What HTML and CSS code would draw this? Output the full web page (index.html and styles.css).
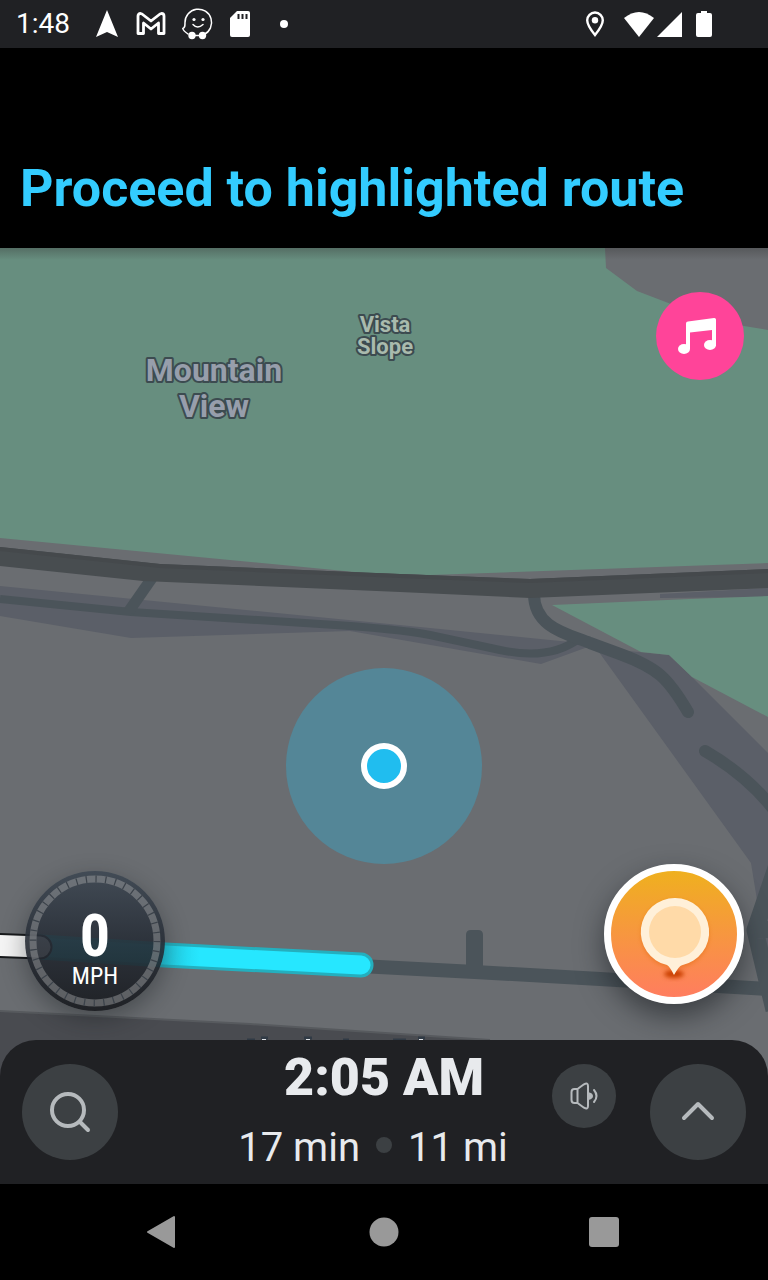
FILE: index.html
```html
<!DOCTYPE html>
<html lang="en">
<head>
<meta charset="utf-8">
<meta name="viewport" content="width=device-width, initial-scale=1">
<title>Navigation</title>
<link rel="stylesheet" href="styles.css">
</head>
<body>
<header class="status">
  <time class="clock">1:48</time>
  <div class="status-icons">
    <svg width="24" height="28" viewBox="0 0 24 28"><path fill="#fff" d="M12 0 23 27 12 22 1 27Z"/></svg>
    <svg width="30" height="24" viewBox="0 0 30 24"><path fill="none" stroke="#fff" stroke-width="2.8" stroke-linejoin="round" d="M2 4Q2 1.5 4.500 1.500L6 2l9 7 9-7 1.500-.5Q28 1.500 28 4v17.500h-5.500V11l-7.500 6L7.500 11v10.500H2Z"/></svg>
    <svg width="30" height="32" viewBox="2 0 30 32"><g fill="none" stroke="#fff" stroke-width="1.500" stroke-linecap="round"><path d="M7 26C4 24 2 22 1.800 20.500 4 20 4 18 4 14.500A13.300 13.300 0 1 1 23 26.500M13 27.500h5M12 16.500q4.500 5 10 0"/></g><g fill="#fff"><circle cx="13" cy="11.500" r="1.600"/><circle cx="22" cy="11.500" r="1.600"/><circle cx="11" cy="27.500" r="3.700"/><circle cx="21.500" cy="27.500" r="3.700"/></g></svg>
    <svg width="20" height="26" viewBox="0 0 20 26"><path fill="#fff" d="M7 0h11q2 0 2 2v22q0 2-2 2H2q-2 0-2-2V7Z"/><path stroke="#202124" stroke-width="2" d="M8.500 3v5M12.500 3v5M16.500 3v5"/></svg>
    <svg class="more" width="8" height="8" viewBox="0 0 8 8"><circle cx="4" cy="4" r="4" fill="#fff"/></svg>
  </div>
  <div class="system-icons">
    <svg width="18" height="26" viewBox="0 0 18 26"><path fill="none" stroke="#fff" stroke-width="2.400" d="M9 24Q1.200 14.500 1.200 9.300a7.800 7.800 0 0 1 15.600 0Q16.800 14.500 9 24Z"/><circle cx="9" cy="9.300" r="3.200" fill="#fff"/></svg>
    <svg class="wifi" width="30" height="25" viewBox="0 0 30 25"><path fill="#fff" d="M0 6Q15-6 30 6L15 25Z"/></svg>
    <svg width="25" height="25" viewBox="0 0 25 25"><path fill="#fff" d="M25 0v25H0Z"/></svg>
    <svg class="battery" width="16" height="26" viewBox="0 0 16 26"><path fill="#fff" d="M5 0h6v2h3q2 0 2 2v20q0 2-2 2H2q-2 0-2-2V4q0-2 2-2h3Z"/></svg>
  </div>
</header>

<section class="banner"><h1>Proceed to highlighted route</h1></section>

<main class="stage">
  <svg class="map" viewBox="0 248 768 936" preserveAspectRatio="xMidYMin slice" role="img" aria-label="Map">
    <defs>
      <linearGradient id="routeStart" gradientUnits="userSpaceOnUse" x1="0" y1="0" x2="200" y2="0">
        <stop offset=".8" stop-color="#22c9de"/><stop offset="1" stop-color="#26e7ff"/>
      </linearGradient>
      <linearGradient id="topShade" x1="0" y1="0" x2="0" y2="1">
        <stop offset="0" stop-color="#333" stop-opacity=".35"/><stop offset="1" stop-color="#333" stop-opacity="0"/>
      </linearGradient>
    </defs>
    <path fill="#6a6d71" d="M0 248h768v936H0Z"/>
    <g fill="#5b5f68">
      <path d="M0 586 430 628 560 641 596 644 541 664 350 631 131 638 0 616Z"/>
      <path d="M596 648 618 650 669 655 692 677 768 753V1010L757 900 751 863Z"/>
      <path d="M660 594 768 588v9l-108 1Z"/>
    </g>
    <g fill="#678e7f">
      <path d="M0 248h605l1 20 31 23 34 13 73 22 24 4v233l-338 12-65-2L0 538Z"/>
      <path d="M552 605 690 599l78-3v121l-76-40-23-22-28-3Z"/>
    </g>
    <g fill="none" stroke="#4b545a" stroke-linejoin="round">
      <path stroke-width="8" d="M0 599 131 612 320 624Q400 629 430 635L500 650Q550 661 580 638"/>
      <path stroke-width="11" d="M152 578 129 611"/>
      <path stroke-width="12" stroke-linecap="round" d="M534 594C534 628 568 634 590 643L620 654C658 668 668 678 688 712M705 751Q748 776 774 810"/>
      <path stroke-width="14" d="M360 966 475 972 600 979 768 989"/>
      <path stroke-width="17" d="M776 868 755 930 774 1010M755 930 780 929"/>
    </g>
    <path fill="#4b545a" d="M466 975V935q0-5 5-5h7q5 0 5 5v40Z"/>
    <path fill="#484d50" d="M0 547 160 564 400 574 530 579 768 569v19l-238 10-130-6-257-11L0 566Z"/>
    <path fill="#45494c" d="M0 547 160 564 400 574 530 579 768 569v4l-238 10-130-5-240-10L0 551Z"/>
    <path fill="#494b50" d="M0 1011 250 1024 490 1040V1184H0Z"/>
    <path fill="none" stroke="#575a5e" stroke-width="2" d="M0 1011 250 1024 490 1040"/>
    <g stroke-width="3" stroke="#303a45"><path d="M261 1038h7M304 1038h8M418 1038h7M247 1040h8M343 1040h6M393 1040h13"/></g>
    <path stroke="#e0e4e8" stroke-width="2" d="M262 1040h4M306 1040h4M419 1040h4"/>
    <g fill="none" stroke-linecap="round">
      <path stroke="#24afbe" stroke-width="25" d="M40 947 165 955 361 965"/>
      <path stroke="url(#routeStart)" stroke-width="19" d="M40 947 165 955 361 965"/>
      <path stroke="#17191b" stroke-width="25" d="M-10 945 40 947"/>
      <path stroke="#f4f4f4" stroke-width="21" d="M-10 945 40 947"/>
    </g>
    <circle cx="384" cy="766" r="98" fill="#548697"/>
    <circle cx="384" cy="766" r="20" fill="#20bdef" stroke="#fff" stroke-width="6"/>
    <g class="place city"><text x="214" y="381">Mountain</text><text x="214" y="417">View</text></g>
    <g class="place area"><text x="385" y="332">Vista</text><text x="385" y="354">Slope</text></g>
    <path fill="url(#topShade)" d="M0 248h768v12H0Z"/>
  </svg>

  <button class="round music" aria-label="Music">
    <svg width="44" height="44" viewBox="0 0 44 44"><path fill="#fff" d="M8 9.500Q8 7.700 10 7.500L36 4q2-.2 2 1.500V32H34V16L12 18.500V35H8Z"/><ellipse cx="6" cy="35" rx="6" ry="5" fill="#fff"/><ellipse cx="32" cy="31" rx="6" ry="5" fill="#fff"/></svg>
  </button>

  <div class="floating">
    <div class="speed">
      <svg class="dial" viewBox="0 0 140 140" aria-hidden="true">
        <defs><linearGradient id="dialFill" x1="0" y1="0" x2="0" y2="1"><stop offset="0" stop-color="#3e4853"/><stop offset=".5" stop-color="#272d36"/><stop offset="1" stop-color="#181a1e"/></linearGradient></defs>
        <circle cx="70" cy="70" r="70" fill="url(#dialFill)" opacity=".91"/>
        <circle cx="70" cy="70" r="62" fill="none" stroke="#9a9c9e" stroke-opacity=".5" stroke-width="7"/>
        <circle cx="70" cy="70" r="62" fill="none" stroke="#3b424a" stroke-width="7" stroke-dasharray="1.200 8.539"/>
      </svg>
      <span class="speed-value">0</span>
      <span class="speed-unit">MPH</span>
    </div>
    <button class="round report" aria-label="Report">
      <svg width="80" height="90" viewBox="0 0 80 90">
        <defs><filter id="soft" x="-50%" y="-50%" width="200%" height="200%"><feGaussianBlur stdDeviation="2"/></filter></defs>
        <ellipse cx="40" cy="85" rx="10" ry="4" fill="#c93f05" filter="url(#soft)"/>
        <circle cx="41" cy="45" r="34" fill="#dc6500" opacity=".45" filter="url(#soft)"/>
        <path fill="#fff0d9" d="M41 9a34 34 0 0 1 7 67.300Q45 77 40 86 36 78 33 76.100A34 34 0 0 1 41 9Z"/>
        <circle cx="41" cy="43" r="26" fill="#ffdaa8"/>
      </svg>
    </button>
  </div>

  <section class="sheet">
    <button class="round tool" aria-label="Search"><svg width="48" height="48" viewBox="0 0 48 48"><g fill="none" stroke="#b6babd" stroke-width="4" stroke-linecap="round"><circle cx="22" cy="22" r="16"/><path d="m34 34 8 8"/></g></svg></button>
    <div class="eta">
      <p class="arrival">2:05 AM</p>
      <p class="trip"><span class="duration">17 min</span><i class="dot"></i><span>11 mi</span></p>
    </div>
    <div class="actions">
      <button class="round tool small" aria-label="Sound"><svg width="32" height="32" viewBox="0 0 32 32"><g fill="none" stroke="#b6babd" stroke-width="2" stroke-linejoin="round" stroke-linecap="round"><path d="M9.500 9H6.500Q3.500 9 3.500 12v8q0 3 3 3h3ZM9.500 9 16 4.300q4-2.300 4 1.700v20q0 4-4 1.700L9.500 23M26 10q5 6 0 12"/></g><path fill="#b6babd" d="M20 12q5 1 5 4t-5 4Z"/></svg></button>
      <button class="round tool" aria-label="Expand"><svg width="48" height="48" viewBox="0 0 48 48"><path fill="none" stroke="#b6babd" stroke-width="4" stroke-linecap="round" stroke-linejoin="round" d="m10 30 14-14 14 14"/></svg></button>
    </div>
  </section>
</main>

<nav class="system-nav" aria-label="System">
  <button class="key" aria-label="Back"><svg width="32" height="32" viewBox="0 0 32 32"><path fill="#999" stroke="#999" stroke-width="2" stroke-linejoin="round" d="M26 1v30L0 16Z"/></svg></button>
  <button class="key" aria-label="Home"><svg width="32" height="32" viewBox="0 0 32 32"><circle cx="16" cy="16" r="14.500" fill="#999"/></svg></button>
  <button class="key" aria-label="Recents"><svg width="32" height="32" viewBox="0 0 32 32"><rect x="1" y="1" width="30" height="30" rx="3" fill="#999"/></svg></button>
</nav>
</body>
</html>
```
FILE: styles.css
```css
* { box-sizing: border-box; }

body {
  margin: 0;
  min-height: 100vh;
  display: flex;
  flex-direction: column;
  background: #000;
  color: #e8eaed;
  font-family: Roboto, "Liberation Sans", sans-serif;
}

h1, p { margin: 0; }
svg { display: block; overflow: visible; }

button {
  border: 0;
  padding: 0;
  background: none;
  color: inherit;
  font: inherit;
}

.status {
  display: flex;
  align-items: center;
  height: 48px;
  padding: 0 56px 0 16px;
  background: #202124;
  color: #fff;
}
.clock { font-size: 28px; line-height: 50px; margin-right: 25px; }
.status-icons { display: flex; align-items: center; gap: 17px; }
.more { margin-left: 13px; }
.system-icons { display: flex; align-items: center; margin-left: auto; }
.wifi { margin-left: 20px; margin-right: 3px; }
.battery { margin-left: 14px; }

.banner {
  display: flex;
  align-items: flex-end;
  min-height: 200px;
  padding: 0 20px 27px;
}
.banner h1 {
  color: #33ccff;
  font-size: 52px;
  font-weight: 700;
  line-height: 64px;
}

.stage {
  position: relative;
  flex: 1;
  display: flex;
  flex-direction: column;
  overflow: hidden;
}
.map { position: absolute; inset: 0; width: 100%; height: 100%; overflow: hidden; }
.place {
  font-weight: 700;
  text-anchor: middle;
  paint-order: stroke;
  stroke: #3c4b50;
  stroke-width: 4px;
  stroke-linejoin: round;
}
.city { font-size: 32px; fill: #979eab; }
.area { font-size: 22px; fill: #a9baad; }

.round {
  display: grid;
  place-items: center;
  flex: none;
  border-radius: 50%;
}
.music {
  position: relative;
  align-self: flex-end;
  width: 88px;
  height: 88px;
  margin: 44px 24px 0 0;
  background: #ff4499;
}

.floating {
  position: relative;
  display: flex;
  justify-content: space-between;
  align-items: flex-end;
  margin-top: auto;
  padding: 0 24px 29px 25px;
}
.speed {
  position: relative;
  display: flex;
  flex-direction: column;
  align-items: center;
  width: 140px;
  height: 140px;
  padding-top: 37px;
  border-radius: 50%;
  box-shadow: 0 8px 24px rgba(20, 24, 28, .4);
  color: #fff;
  font-family: "Roboto Condensed", "Liberation Sans Narrow", Roboto, sans-serif;
}
.dial { position: absolute; inset: 0; }
.speed-value { position: relative; font-size: 60px; font-weight: 700; line-height: 56px; }
.speed-unit { position: relative; font-size: 24px; line-height: 24px; }
.report {
  width: 140px;
  height: 140px;
  margin-bottom: 7px;
  border: 7px solid #fff;
  background: linear-gradient(#efb01f, #ff7d5f);
  box-shadow: 0 12px 28px rgba(20, 24, 28, .55);
}

.sheet {
  position: relative;
  display: grid;
  grid-template-columns: 1fr auto 1fr;
  min-height: 144px;
  padding: 0 22px;
  border-radius: 36px 36px 0 0;
  background: #202124;
}
.tool {
  width: 96px;
  height: 96px;
  margin-top: 24px;
  background: #3c4043;
}
.small { width: 64px; height: 64px; }
.actions { display: flex; justify-content: flex-end; gap: 34px; }
.eta { padding-top: 8px; }
.arrival { font-size: 52px; font-weight: 900; line-height: 60px; text-align: center; }
.trip {
  display: grid;
  grid-template-columns: 1fr 16px 1fr;
  gap: 16px;
  align-items: center;
  margin-top: 12px;
  font-size: 40px;
  line-height: 56px;
  white-space: nowrap;
}
.duration { text-align: right; }
.dot { width: 16px; height: 16px; margin-bottom: 6px; border-radius: 50%; background: #3c4043; }

.system-nav {
  display: flex;
  justify-content: center;
  gap: 124px;
  background: #000;
}
.key {
  display: grid;
  place-items: center;
  width: 96px;
  height: 96px;
}
```
